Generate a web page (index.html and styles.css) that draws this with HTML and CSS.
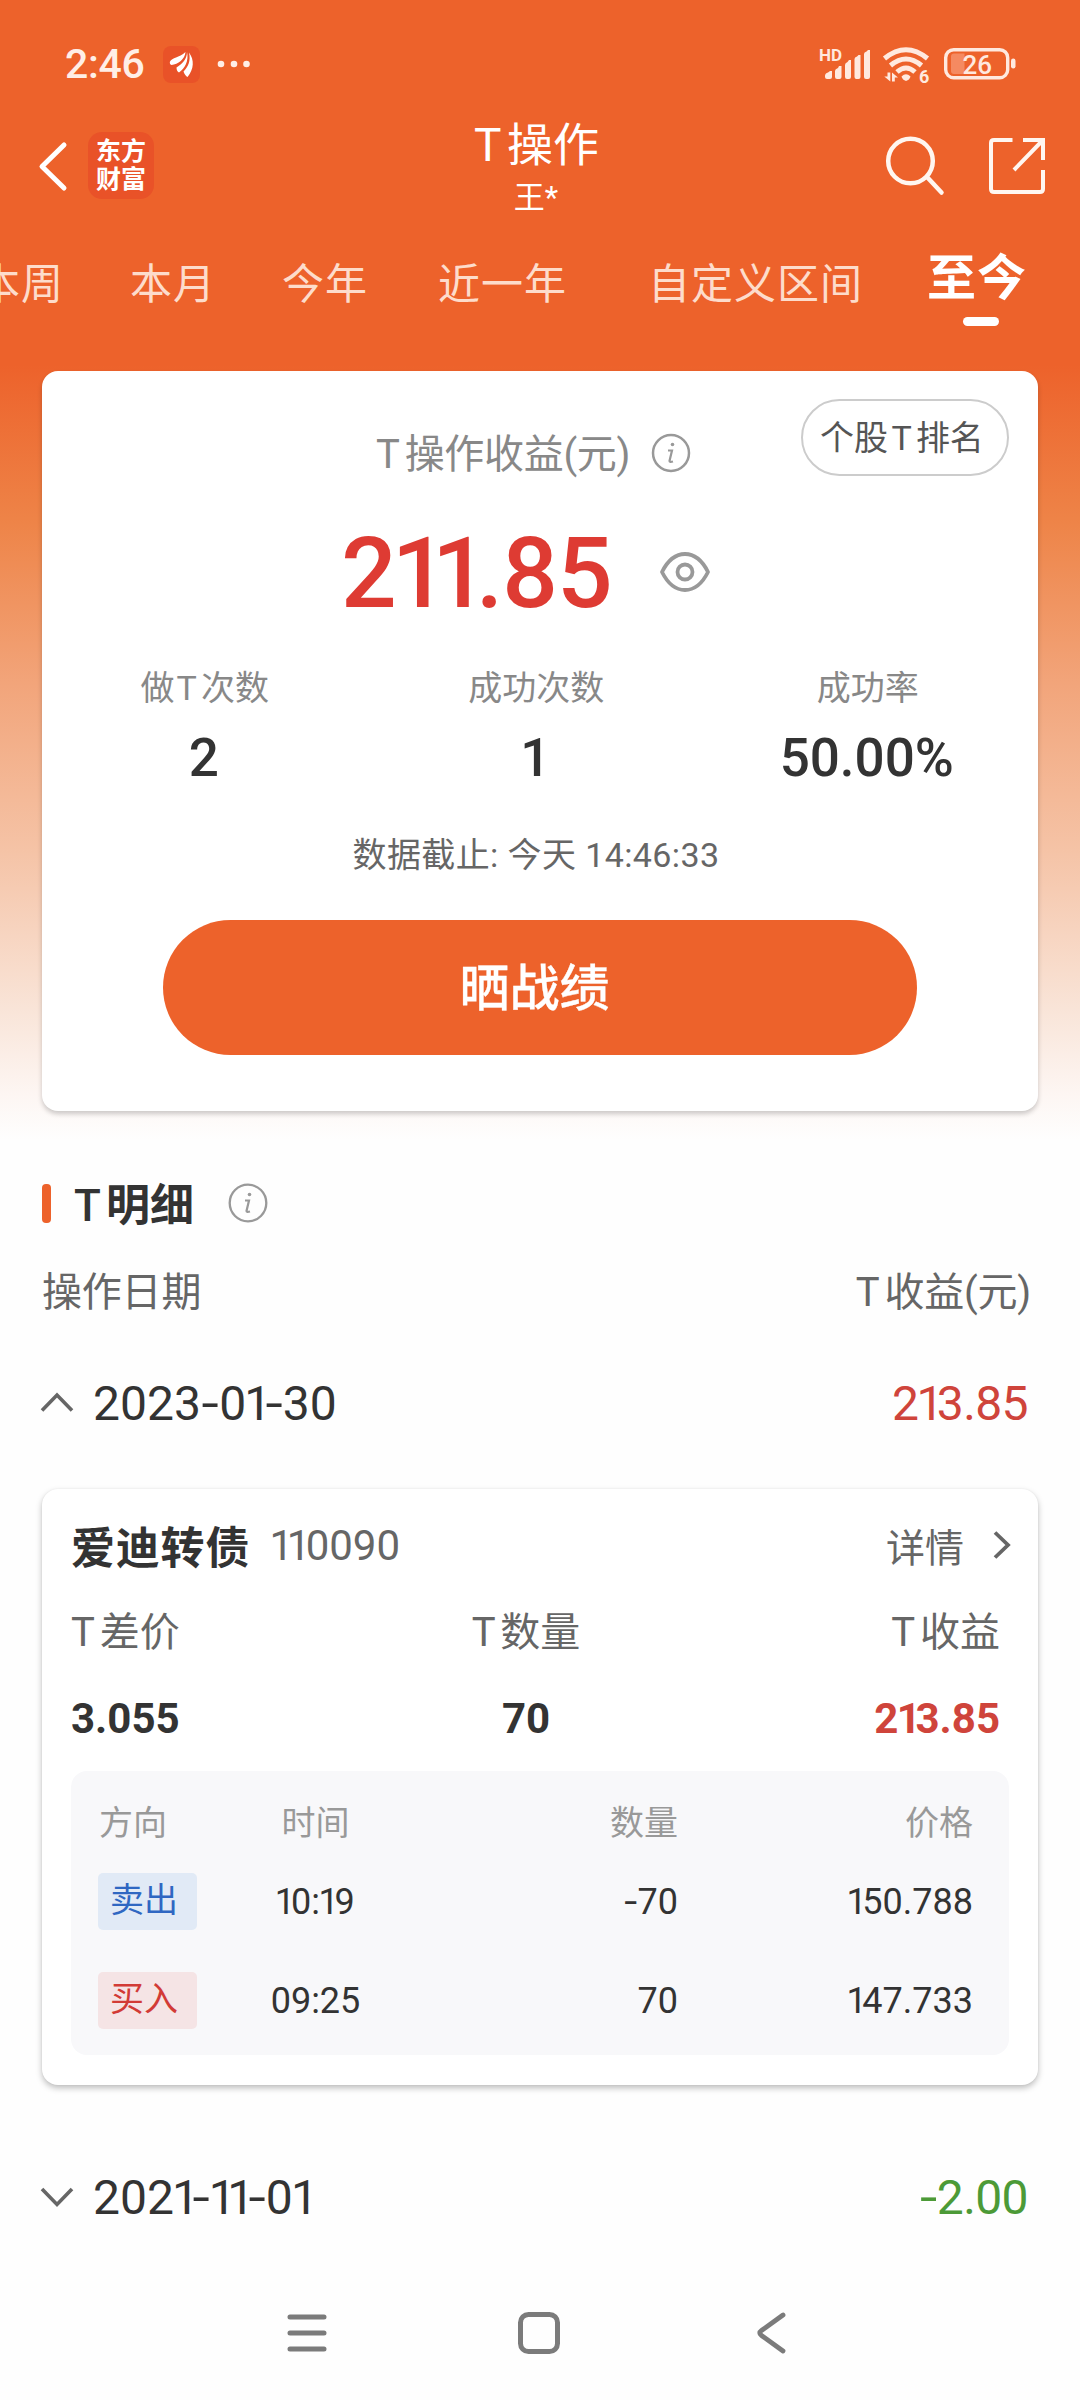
FILE: index.html
```html
<!DOCTYPE html>
<html lang="zh-CN">
<head>
<meta charset="utf-8">
<title>T操作</title>
<link rel="stylesheet" href="styles.css">
</head>
<body>
<div class="screen">
  <header class="hero">
    <div class="status">
      <span class="clock">2:46</span>
      <svg class="app-mini" width="37" height="37" viewBox="0 0 37 37">
        <rect width="37" height="37" rx="8" fill="#e95228"/>
        <g fill="#fff">
          <path d="M7 15.500C9 11.500 16 12 22.500 6C22 13 15 18.500 8.500 19C7 18.500 6.500 17 7 15.500Z"/>
          <path d="M24 6C24 13 19.500 17.500 13.500 21.500C13.500 24 14.500 26 16 26.500C22 22 26 15 24 6Z"/>
          <path d="M26 6.500C28 15 25 21 20.500 25.500C21.500 28.500 23 30 24.500 31C31 23 31.500 14 26 6.500Z"/>
        </g>
      </svg>
      <svg class="dots" width="34" height="8" viewBox="0 0 34 8" fill="#ffeee6"><circle cx="4" cy="4" r="3.300"/><circle cx="17" cy="4" r="3.300"/><circle cx="29.500" cy="4" r="3.300"/></svg>
      <svg class="signals" width="200" height="50" viewBox="0 0 200 50" fill="#ffe9df">
        <text x="3" y="20.500" class="hd">HD</text>
        <path d="M9 36q0-3 3-3.500l2-1.500h2v6q0 2-2 2h-3q-2 0-2-2zM19 31q0-2 3-3l1-2h2.500v11q0 2-2 2h-2.500q-2 0-2-2zM29 25q0-2 2.500-3l1.500-2h2v17q0 2-2 2h-2q-2 0-2-2zM38.500 19q0-2 2.500-2.500l1.500-1.500h2v22q0 2-2 2h-2q-2 0-2-2zM48 14q0-2 2.500-2.500l1.500-1.500h2v27q0 2-2 2h-2q-2 0-2-2z"/>
        <g fill="none" stroke="#ffe9df" stroke-width="5">
          <path d="M68.500 18.500Q90 1 111.500 18.500"/>
          <path d="M74.500 25.500Q90 12.500 105.500 25.500"/>
          <path d="M81 32Q90 24 99 32"/>
        </g>
        <path d="M85.500 36.500q4.500-4.500 9 0q-1 3.500-4.500 4.500q-3.500-1-4.500-4.500z"/>
        <path d="M71.500 32.500h2.800v9l-6-5h3.200zM76 41.500v-9l6 5h-3.200v4z"/>
        <text x="103" y="42.500" class="wifi6">6</text>
        <rect x="129.700" y="9.700" width="62" height="28" rx="8" fill="none" stroke="#ffe9df" stroke-width="3.400"/>
        <path d="M138 13.500h10.500v20.500h-10.500a3 3 0 0 1-3-3v-14.500a3 3 0 0 1 3-3z" fill="#f58a61"/>
        <rect x="195" y="18.500" width="4.500" height="10" rx="2.200"/>
        <text x="146.500" y="33.500" class="batt">26</text>
      </svg>
    </div>

    <div class="bar">
      <svg class="back" width="32" height="52" viewBox="0 0 32 52"><path d="M27 5L5 26.500L27 48" fill="none" stroke="#fff" stroke-width="5" stroke-linecap="round" stroke-linejoin="round"/></svg>
      <div class="brand"><span>东方</span><span>财富</span></div>
      <div class="titles"><h1><span class="t">T</span>操作</h1><p>王*</p></div>
      <svg class="search" width="64" height="64" viewBox="0 0 64 64" fill="none" stroke="#fff6f0" stroke-width="4.500" stroke-linecap="round"><circle cx="28.500" cy="27" r="22.300"/><path d="M45 43L59.500 58.500"/></svg>
      <svg class="share" width="60" height="60" viewBox="0 0 60 60" fill="none" stroke="#fff6f0" stroke-width="4"><path d="M25.500 4H7q-3 0-3 3V53q0 3 3 3H53q3 0 3-3V34M36 4H56V24M56 4L27 34"/></svg>
    </div>

    <nav class="tabs">
      <span>本周</span><span>本月</span><span>今年</span><span>近一年</span><span>自定义区间</span><span class="on">至今</span>
    </nav>

    <section class="card summary">
      <div class="sum-head">
        <span class="sum-label"><span class="t">T</span>操作收益(元)</span>
        <svg class="info" width="40" height="40" viewBox="0 0 40 40"><circle cx="20" cy="20" r="18" fill="none" stroke="#999" stroke-width="2.500"/><circle cx="21.500" cy="11.500" r="1.800" fill="#999"/><path d="M17 17.500h4L18.500 28q0 1.500 3.500 .5" fill="none" stroke="#999" stroke-width="2.200"/></svg>
        <span class="rank">个股<span class="t">T</span>排名</span>
      </div>
      <div class="sum-total">
        <span class="total">2<i class="one">1</i><i class="one">1</i>.85</span>
        <svg class="eye" width="52" height="42" viewBox="0 0 52 42" fill="none" stroke="#999" stroke-width="3.800"><path d="M3 21Q12 3 26 3T49 21Q40 39 26 39T3 21Z" stroke-linejoin="round"/><circle cx="26" cy="21" r="7.500"/></svg>
      </div>
      <div class="stats">
        <div><span class="k">做<span class="t">T</span>次数</span><b>2</b></div>
        <div><span class="k">成功次数</span><b>1</b></div>
        <div><span class="k">成功率</span><b>50.00%</b></div>
      </div>
      <p class="asof">数据截止: 今天 14:46:33</p>
      <button class="show">晒战绩</button>
    </section>
  </header>

  <main>
    <h2 class="sect"><i class="mark"></i><span><span class="t">T</span>明细</span>
      <svg class="info" width="40" height="40" viewBox="0 0 40 40"><circle cx="20" cy="20" r="18.300" fill="none" stroke="#999" stroke-width="2.300"/><circle cx="21.500" cy="11.500" r="1.800" fill="#999"/><path d="M17 17.500h4L18.500 28q0 1.500 3.500 .5" fill="none" stroke="#999" stroke-width="2.200"/></svg>
    </h2>
    <div class="row cols"><span>操作日期</span><span><span class="t">T</span>收益(元)</span></div>
    <div class="row day first">
      <svg width="34" height="22" viewBox="0 0 34 22"><path d="M2 19.500L17 4L32 19.500" fill="none" stroke="#666" stroke-width="3.600"/></svg>
      <span class="date">2023<i class="dash">-</i>0<i class="one">1</i><i class="dash">-</i>30</span>
      <span class="amt red">2<i class="one">1</i>3.85</span>
    </div>

    <section class="card trade">
      <div class="name"><b>爱迪转债</b><span class="code"><i class="one">1</i><i class="one">1</i>0090</span><span class="more">详情</span>
        <svg width="20" height="32" viewBox="0 0 20 32"><path d="M3 3.500L16 16L3 28.500" fill="none" stroke="#666" stroke-width="3.800"/></svg>
      </div>
      <div class="tri heads"><span><span class="t">T</span>差价</span><span><span class="t">T</span>数量</span><span><span class="t">T</span>收益</span></div>
      <div class="tri vals"><b>3.055</b><b>70</b><b class="red">2<i class="one">1</i>3.85</b></div>
      <div class="fills">
        <div class="fill th"><span>方向</span><span class="c">时间</span><span class="r">数量</span><span class="r">价格</span></div>
        <div class="fill"><span class="tag sell">卖出</span><span class="c"><i class="one">1</i>0:<i class="one">1</i>9</span><span class="r"><i class="dash">-</i>70</span><span class="r"><i class="one">1</i>50.788</span></div>
        <div class="fill last"><span class="tag buy">买入</span><span class="c">09:25</span><span class="r">70</span><span class="r"><i class="one">1</i>47.733</span></div>
      </div>
    </section>

    <div class="row day second">
      <svg width="34" height="22" viewBox="0 0 34 22"><path d="M2 3L17 18.500L32 3" fill="none" stroke="#666" stroke-width="3.600"/></svg>
      <span class="date">202<i class="one">1</i><i class="dash">-</i><i class="one">1</i><i class="one">1</i><i class="dash">-</i>0<i class="one">1</i></span>
      <span class="amt green"><i class="dash">-</i>2.00</span>
    </div>
  </main>

  <footer class="sysnav">
    <svg width="44" height="46" viewBox="0 0 44 46" stroke="#7b7b7b" stroke-width="5" stroke-linecap="round"><path d="M5 7H39M5 23H39M5 39H39"/></svg>
    <svg width="44" height="46" viewBox="0 0 44 46"><rect x="3.500" y="4.500" width="37" height="37" rx="8" fill="none" stroke="#7b7b7b" stroke-width="5"/></svg>
    <svg width="44" height="46" viewBox="0 0 44 46"><path d="M34 5L12.500 20.500Q9 23 12.500 25.500L34 41" fill="none" stroke="#7b7b7b" stroke-width="4.800" stroke-linecap="round"/></svg>
  </footer>
</div>
</body>
</html>
```
FILE: styles.css
```css
* { box-sizing: border-box; margin: 0; padding: 0; }
body {
  width: 1080px;
  height: 2400px;
  overflow: hidden;
  background: #fefefe;
  color: #333;
  font-family: Roboto, "Noto Sans CJK SC", sans-serif;
}
i { font-style: normal; }
svg { display: block; flex: none; }
span, b, p, h1 { white-space: nowrap; }
.t { letter-spacing: .12em; }
.one { display: inline-block; width: .41em; text-indent: -.04em; letter-spacing: -.12em; }
.dash { display: inline-block; width: .38em; text-align: center; transform: scaleX(1.3); }
.red { color: #cf443b; }
.green { color: #4c9a37; }

.screen { width: 1080px; height: 2400px; display: flex; flex-direction: column; }
.hero {
  height: 1140px;
  flex: none;
  background: linear-gradient(#ed622b 0, #ed622b 365px, #ee8448 523px, #f2a57b 686px, #f5c3a6 850px, #f9e5d9 1013px, #fdf6f3 1095px, #fefefe 1140px);
}

/* status bar */
.status { display: flex; align-items: flex-start; height: 120px; padding: 45px 64px 0 65px; color: #ffeee6; }
.clock { width: 98px; font-size: 41px; font-weight: 500; line-height: 38px; letter-spacing: -.3px; }
.app-mini { margin-top: 1px; }
.dots { margin: 15px 0 0 17px; }
.signals { margin: -5px 0 0 auto; }
.hd { font-size: 17px; font-weight: 700; }
.wifi6 { font-size: 18px; font-weight: 700; }
.batt { font-size: 26px; font-weight: 500; }

/* title bar */
.bar { display: flex; height: 120px; color: #fff; }
.back { margin: 20px 0 0 37px; }
.brand {
  width: 66px; height: 67px; margin: 12px 0 0 19px; padding-top: 6px;
  border-radius: 14px; background: #e95228;
  display: flex; flex-direction: column; align-items: center;
  font-size: 25px; font-weight: 700; line-height: 28px;
}
.titles { width: 124px; margin-left: 320px; text-align: center; }
.titles h1 { font-size: 46px; font-weight: 400; line-height: 50px; }
.titles p { font-size: 31px; line-height: 36px; margin-top: 10px; }
.search { margin: 14px 0 0 284px; }
.share { margin: 16px 0 0 41px; }

/* period tabs */
.tabs { display: flex; height: 131px; color: #fddccb; font-size: 42px; letter-spacing: 1px; line-height: 90px; }
.tabs span { margin-right: 66px; }
.tabs span:first-child { margin-left: -22px; }
.tabs span:nth-child(3) { margin-right: 70px; }
.tabs span:nth-child(4) { margin-right: 81px; }
.tabs span:nth-child(5) { margin-right: 64px; }
.tabs .on {
  display: flex; flex-direction: column; margin: 0;
  color: #fff; font-size: 49px; font-weight: 700; line-height: 77px;
}
.tabs .on::after { content: ""; width: 36px; height: 9px; margin-left: 36px; border-radius: 5px; background: #fff; }

.card { margin: 0 42px; border-radius: 16px; background: #fff; }

/* summary card */
.summary { height: 740px; overflow: hidden; box-shadow: 0 3px 5px rgba(0,0,0,.2); }
.sum-head { display: flex; height: 130px; color: #888; }
.sum-label { width: 273px; margin: 59px 0 0 334px; font-size: 40px; line-height: 50px; letter-spacing: -.3px; }
.summary .info { margin: 62px 0 0 2px; }
.rank {
  width: 208px; height: 77px; margin: 28px 0 0 110px; padding-right: 6px;
  border: 2px solid #ccc; border-radius: 39px;
  color: #555; font-size: 34px; line-height: 74px; text-align: center;
}
.rank .t { margin-left: .1em; }
.sum-total { display: flex; height: 150px; }
.total { width: 276px; margin: 13px 0 0 299px; color: #de3b33; font-size: 98px; font-weight: 500; line-height: 120px; letter-spacing: -1px; }
.eye { margin: 50px 0 0 42px; }
.stats { display: grid; grid-template-columns: repeat(3, 331.500px); margin-left: -3px; height: 160px; }
.stats div { display: flex; flex-direction: column; align-items: center; padding-top: 14px; }
.k { color: #888; font-size: 34px; line-height: 46px; }
.k .t { margin-left: .06em; }
.stats b { font-size: 53px; font-weight: 500; line-height: 60px; margin: 17px 2px 0 0; }
.asof { height: 109px; margin-left: -8px; text-align: center; color: #666; font-size: 34px; line-height: 88px; letter-spacing: .4px; }
.show {
  display: block; width: 754px; height: 135px; margin: 0 0 0 121px; padding-right: 11px;
  border: 0; border-radius: 68px; background: #ed622b; color: #fff;
  font: 500 50px/139px Roboto, "Noto Sans CJK SC", sans-serif;
  -webkit-text-stroke: .3px #fff;
}

/* detail list */
.sect { display: flex; align-items: center; height: 126px; padding-left: 42px; font-size: 44px; font-weight: 700; }
.sect > span { margin-top: -3px; }
.sect .t { font-weight: 500; }
.mark { width: 9px; height: 39px; margin-right: 23px; border-radius: 4px; background: #ed622b; }
.sect .info { margin-left: 34px; }
.row { display: flex; align-items: center; padding: 0 52px 0 42px; }
.cols { height: 46px; padding-right: 49px; justify-content: space-between; color: #666; font-size: 40px; letter-spacing: -.2px; }
.day { height: 60px; font-size: 48px; }
.day svg { margin-left: -2px; }
.day .one { width: .385em; }
.date { margin-left: 19px; }
.amt { margin-left: auto; letter-spacing: -.6px; }
.first { margin-top: 61px; }
.first svg { margin-top: -3px; }
.second { margin-top: 82px; }

/* trade card */
.trade { height: 596px; margin-top: 56px; padding: 0 29px; box-shadow: 0 3px 6px rgba(0,0,0,.26), 0 0 2px rgba(0,0,0,.05); }
.name { display: flex; align-items: center; height: 112px; margin-bottom: -1px; }
.name b { font-size: 44px; letter-spacing: .8px; }
.code { margin-left: 21px; color: #666; font-size: 42px; }
.more { margin-left: auto; margin-right: 28px; color: #666; font-size: 39px; }
.name svg { margin-right: -3px; }
.tri { display: grid; grid-template-columns: 300px 310px 319px; height: 50px; align-items: center; }
.tri :nth-child(2) { justify-self: center; }
.tri > :nth-child(3) { justify-self: end; }
.heads { color: #666; font-size: 40px; }
.vals { margin-top: 43px; font-size: 42px; }
.fills { height: 284px; margin-top: 28px; padding: 21px 36px 0 27px; border-radius: 16px; background: #f8f8fa; }
.fill { display: grid; grid-template-columns: 99px 237px 244px 1fr; align-items: center; height: 57px; font-size: 36px; }
.c { width: 237px; text-align: center; }
.r { text-align: right; }
.th { color: #999; font-size: 34px; height: 56px; margin-bottom: 25px; }
.th span:first-child { margin-left: 1px; }
.last { margin-top: 42px; }
.tag { width: 99px; height: 57px; padding-left: 12px; border-radius: 5px; font-size: 34px; line-height: 54px; }
.sell { background: #e1eaf6; color: #2f67c2; }
.buy { background: #f5e4e5; color: #d23b36; }

/* system navigation */
.sysnav { display: flex; gap: 188px; height: 123px; margin-top: auto; padding: 33px 0 0 285px; }
```
